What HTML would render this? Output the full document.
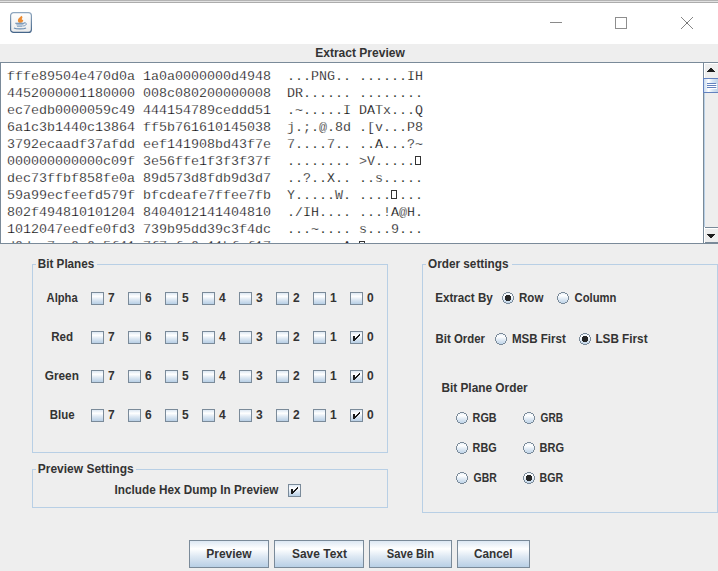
<!DOCTYPE html>
<html><head><meta charset="utf-8">
<style>
*{margin:0;padding:0;box-sizing:border-box}
html,body{width:718px;height:571px;overflow:hidden;background:#eeeeee;position:relative}
body{font-family:"Liberation Sans",sans-serif}
.a{position:absolute}
.t{position:absolute;font:bold 12px "Liberation Sans",sans-serif;line-height:14px;color:#333333;white-space:pre;transform-origin:0 0}
#topline{left:0;top:0;width:718px;height:3px;background:linear-gradient(#b4b4b4 0,#b4b4b4 1px,#e2e2e2 1px,#e2e2e2 2px,#acacac 2px)}
#titlebar{left:0;top:3px;width:718px;height:41px;background:#ffffff}
#ta{left:0;top:62px;width:718px;height:182px;border:1px solid #7a8a99;border-right:none;background:#fff;overflow:hidden}
#hex{left:6px;top:5px;font:13.333px "Liberation Mono",monospace;line-height:17px;color:#000;white-space:pre;-webkit-text-stroke:0.25px #fff}
#sb{left:703px;top:63px;width:15px;height:180px;background:#eeeeee;border-left:1px solid #7a8a99}
.tb{position:absolute;border:1px solid #b8cfe5}
.gap{position:absolute;height:3px;background:#eeeeee}
.cb{position:absolute;width:13px;height:13px;border:1px solid #7a8a99;background:linear-gradient(#dde8f3 0%,#ffffff 30%,#dde8f3 60%,#b8cfe5 100%)}
.ck{position:absolute;left:-1px;top:-1px}
.rb{position:absolute}
.btn{position:absolute;top:540px;height:28px;border:1px solid #7a8a99;background:linear-gradient(#dde8f3 0%,#ffffff 30%,#dde8f3 60%,#b8cfe5 100%)}
</style></head><body>
<svg width="0" height="0" style="position:absolute"><defs><linearGradient id="rg" x1="0" y1="0" x2="0" y2="12" gradientUnits="userSpaceOnUse"><stop offset="0" stop-color="#dde8f3"/><stop offset="0.3" stop-color="#ffffff"/><stop offset="0.6" stop-color="#dde8f3"/><stop offset="1" stop-color="#b8cfe5"/></linearGradient></defs></svg>
<div id="topline" class="a"></div>
<div id="titlebar" class="a">
 <svg class="a" style="left:10px;top:9px" width="23" height="22" viewBox="0 0 23 22">
  <defs><linearGradient id="ib" x1="0" y1="0" x2="0" y2="1"><stop offset="0" stop-color="#8fa7bf"/><stop offset="1" stop-color="#46668a"/></linearGradient>
  <linearGradient id="if" x1="0" y1="0" x2="0" y2="1"><stop offset="0" stop-color="#ffffff"/><stop offset="1" stop-color="#ebebeb"/></linearGradient></defs>
  <rect x="0.6" y="0.6" width="20.8" height="19.8" rx="3" fill="url(#if)" stroke="url(#ib)" stroke-width="1.2"/>
  <path d="M9 10.8 C7.5 9.5 7.5 7.5 9 6 C10 5 11 4.5 11.5 3.7 C12.5 4.5 12.8 5.5 12 6.5 C11.3 7.2 12 7.6 13.3 8.2 C13 9.5 12 10.5 11 10.8 Z" fill="#ec8a30"/>
  <path d="M5.3 11.3 H14.4" stroke="#6a8cb0" stroke-width="1.1"/>
  <path d="M6.3 12.8 H13.4" stroke="#8aa5c2" stroke-width="1"/>
  <path d="M7 14.2 H12.5" stroke="#7595b7" stroke-width="1"/>
  <path d="M14 10.8 C17.5 10.5 17 13.5 13.2 14" fill="none" stroke="#6a8cb0" stroke-width="0.9"/>
  <path d="M4 16 C6 17.3 14 17.3 16 16" fill="none" stroke="#6f90b3" stroke-width="1.3"/>
 </svg>
 <div class="a" style="left:550px;top:19px;width:12px;height:1px;background:#8a8a8a"></div>
 <div class="a" style="left:615px;top:14px;width:12px;height:12px;border:1px solid #8e8e8e"></div>
 <svg class="a" style="left:681px;top:14px" width="12" height="12" shape-rendering="crispEdges" fill="#858585"><rect x="0" y="0" width="1" height="1"/><rect x="11" y="0" width="1" height="1"/><rect x="1" y="1" width="1" height="1"/><rect x="10" y="1" width="1" height="1"/><rect x="2" y="2" width="1" height="1"/><rect x="9" y="2" width="1" height="1"/><rect x="3" y="3" width="1" height="1"/><rect x="8" y="3" width="1" height="1"/><rect x="4" y="4" width="1" height="1"/><rect x="7" y="4" width="1" height="1"/><rect x="5" y="5" width="1" height="1"/><rect x="6" y="5" width="1" height="1"/><rect x="6" y="6" width="1" height="1"/><rect x="5" y="6" width="1" height="1"/><rect x="7" y="7" width="1" height="1"/><rect x="4" y="7" width="1" height="1"/><rect x="8" y="8" width="1" height="1"/><rect x="3" y="8" width="1" height="1"/><rect x="9" y="9" width="1" height="1"/><rect x="2" y="9" width="1" height="1"/><rect x="10" y="10" width="1" height="1"/><rect x="1" y="10" width="1" height="1"/><rect x="11" y="11" width="1" height="1"/><rect x="0" y="11" width="1" height="1"/><rect x="5" y="5" width="2" height="2" fill="#777"/></svg>
</div>

<div id="ta" class="a"><div id="hex" class="a">fffe89504e470d0a 1a0a0000000d4948  ...PNG.. ......IH
4452000001180000 008c080200000008  DR...... ........
ec7edb0000059c49 444154789ceddd51  .~.....I DATx...Q
6a1c3b1440c13864 ff5b761610145038  j.;.@.8d .[v...P8
3792ecaadf37afdd eef141908bd43f7e  7....7.. ..A...?~
000000000000c09f 3e56ffe1f3f3f37f  ........ &gt;V..... 
dec73ffbf858fe0a 89d573d8fdb9d3d7  ..?..X.. ..s.....
59a99ecfeefd579f bfcdeafe7ffee7fb  Y.....W. .... ...
802f494810101204 8404012141404810  ./IH.... ...!A@H.
1012047eedfe0fd3 739b95dd39c3f4dc  ...~.... s...9...
d0dae7ac0e0a5f41 7f7efa0c11bfef17  ......_A  ......</div><div class="a" style="left:414px;top:93px;width:6px;height:9px;border:1px solid #333"></div><div class="a" style="left:390px;top:127px;width:6px;height:9px;border:1px solid #333"></div><div class="a" style="left:358px;top:178px;width:6px;height:9px;border:1px solid #333"></div></div>
<div id="sb" class="a">
 <div class="a" style="left:0;top:0;width:14px;height:15px;border-top:1px solid #fff;border-left:1px solid #fff"></div>
 <svg class="a" style="left:3px;top:5px" width="8" height="4" shape-rendering="crispEdges"><rect x="3" y="0" width="2" height="1" fill="#1e1e1e"/><rect x="2" y="1" width="4" height="1" fill="#1e1e1e"/><rect x="1" y="2" width="6" height="1" fill="#1e1e1e"/><rect x="0" y="3" width="8" height="1" fill="#1e1e1e"/></svg>
 <div class="a" style="left:-1px;top:15px;width:16px;height:15px;border:1px solid #6382bf;border-right:none;background:linear-gradient(90deg,#c9dbef 0%,#ffffff 30%,#d6e4f3 60%,#b8cfe5 100%)"></div>
 <div class="a" style="left:3px;top:20px;width:9px;height:1px;background:#6382bf;box-shadow:1px 1px 0 #fff"></div>
 <div class="a" style="left:3px;top:22px;width:9px;height:1px;background:#6382bf;box-shadow:1px 1px 0 #fff"></div>
 <div class="a" style="left:3px;top:24px;width:9px;height:1px;background:#6382bf;box-shadow:1px 1px 0 #fff"></div>
 <div class="a" style="left:0;top:30px;width:1px;height:134px;background:#b8cfe5"></div>
 <div class="a" style="left:0;top:164px;width:14px;height:16px;background:#fff"></div>
 <div class="a" style="left:1px;top:164px;width:13px;height:16px;border-top:1px solid #7a8a99;border-bottom:1px solid #7a8a99"></div>
 <div class="a" style="left:1px;top:165px;width:13px;height:14px;border-top:1px solid #fff;background:#eeeeee"></div>
 <svg class="a" style="left:3px;top:171px" width="8" height="4" shape-rendering="crispEdges"><rect x="0" y="0" width="8" height="1" fill="#1e1e1e"/><rect x="1" y="1" width="6" height="1" fill="#1e1e1e"/><rect x="2" y="2" width="4" height="1" fill="#1e1e1e"/><rect x="3" y="3" width="2" height="1" fill="#1e1e1e"/></svg>
</div>

<div class="t" id="k0" style="left:315px;top:46px;transform:translateX(0.20px) scaleX(1.0024)">Extract Preview</div>
<div class="tb" style="left:32px;top:264px;width:356px;height:189px"></div>
<div class="gap" style="left:36px;top:263px;width:61px"></div>
<div class="t" id="k1" style="left:38px;top:257px;transform:translateX(-0.20px) scaleX(0.9724)">Bit Planes</div>
<div class="tb" style="left:32px;top:469px;width:356px;height:39px"></div>
<div class="gap" style="left:36px;top:468px;width:100px"></div>
<div class="t" id="k2" style="left:38px;top:462px;transform:translateX(-0.21px) scaleX(0.9980)">Preview Settings</div>
<div class="tb" style="left:422px;top:264px;width:296px;height:249px"></div>
<div class="gap" style="left:426px;top:263px;width:86px"></div>
<div class="t" id="k3" style="left:428px;top:257px;transform:translateX(-0.00px) scaleX(0.9805)">Order settings</div>
<div class="t" id="k4" style="left:46px;top:291px;transform:translateX(0.60px) scaleX(0.9295)">Alpha</div>
<div class="cb" style="left:91px;top:292px"></div>
<div class="t" id="k5" style="left:108px;top:291px">7</div>
<div class="cb" style="left:128px;top:292px"></div>
<div class="t" id="k6" style="left:145px;top:291px">6</div>
<div class="cb" style="left:165px;top:292px"></div>
<div class="t" id="k7" style="left:182px;top:291px">5</div>
<div class="cb" style="left:202px;top:292px"></div>
<div class="t" id="k8" style="left:219px;top:291px">4</div>
<div class="cb" style="left:239px;top:292px"></div>
<div class="t" id="k9" style="left:256px;top:291px">3</div>
<div class="cb" style="left:276px;top:292px"></div>
<div class="t" id="k10" style="left:293px;top:291px">2</div>
<div class="cb" style="left:313px;top:292px"></div>
<div class="t" id="k11" style="left:330px;top:291px">1</div>
<div class="cb" style="left:350px;top:292px"></div>
<div class="t" id="k12" style="left:367px;top:291px">0</div>
<div class="t" id="k13" style="left:51px;top:330px;transform:translateX(0.20px) scaleX(0.9640)">Red</div>
<div class="cb" style="left:91px;top:331px"></div>
<div class="t" id="k14" style="left:108px;top:330px">7</div>
<div class="cb" style="left:128px;top:331px"></div>
<div class="t" id="k15" style="left:145px;top:330px">6</div>
<div class="cb" style="left:165px;top:331px"></div>
<div class="t" id="k16" style="left:182px;top:330px">5</div>
<div class="cb" style="left:202px;top:331px"></div>
<div class="t" id="k17" style="left:219px;top:330px">4</div>
<div class="cb" style="left:239px;top:331px"></div>
<div class="t" id="k18" style="left:256px;top:330px">3</div>
<div class="cb" style="left:276px;top:331px"></div>
<div class="t" id="k19" style="left:293px;top:330px">2</div>
<div class="cb" style="left:313px;top:331px"></div>
<div class="t" id="k20" style="left:330px;top:330px">1</div>
<div class="cb" style="left:350px;top:331px"><svg class="ck" width="13" height="13" shape-rendering="crispEdges"><rect x="3" y="5" width="2" height="5" fill="#1a1a1a"/><rect x="9" y="3" width="1" height="1" fill="#1a1a1a"/><rect x="9" y="4" width="1" height="1" fill="#1a1a1a"/><rect x="8" y="4" width="1" height="1" fill="#1a1a1a"/><rect x="8" y="5" width="1" height="1" fill="#1a1a1a"/><rect x="7" y="5" width="1" height="1" fill="#1a1a1a"/><rect x="7" y="6" width="1" height="1" fill="#1a1a1a"/><rect x="6" y="6" width="1" height="1" fill="#1a1a1a"/><rect x="6" y="7" width="1" height="1" fill="#1a1a1a"/><rect x="5" y="7" width="1" height="1" fill="#1a1a1a"/><rect x="5" y="8" width="1" height="1" fill="#1a1a1a"/></svg></div>
<div class="t" id="k21" style="left:367px;top:330px">0</div>
<div class="t" id="k22" style="left:45px;top:369px;transform:translateX(-0.20px) scaleX(0.9824)">Green</div>
<div class="cb" style="left:91px;top:370px"></div>
<div class="t" id="k23" style="left:108px;top:369px">7</div>
<div class="cb" style="left:128px;top:370px"></div>
<div class="t" id="k24" style="left:145px;top:369px">6</div>
<div class="cb" style="left:165px;top:370px"></div>
<div class="t" id="k25" style="left:182px;top:369px">5</div>
<div class="cb" style="left:202px;top:370px"></div>
<div class="t" id="k26" style="left:219px;top:369px">4</div>
<div class="cb" style="left:239px;top:370px"></div>
<div class="t" id="k27" style="left:256px;top:369px">3</div>
<div class="cb" style="left:276px;top:370px"></div>
<div class="t" id="k28" style="left:293px;top:369px">2</div>
<div class="cb" style="left:313px;top:370px"></div>
<div class="t" id="k29" style="left:330px;top:369px">1</div>
<div class="cb" style="left:350px;top:370px"><svg class="ck" width="13" height="13" shape-rendering="crispEdges"><rect x="3" y="5" width="2" height="5" fill="#1a1a1a"/><rect x="9" y="3" width="1" height="1" fill="#1a1a1a"/><rect x="9" y="4" width="1" height="1" fill="#1a1a1a"/><rect x="8" y="4" width="1" height="1" fill="#1a1a1a"/><rect x="8" y="5" width="1" height="1" fill="#1a1a1a"/><rect x="7" y="5" width="1" height="1" fill="#1a1a1a"/><rect x="7" y="6" width="1" height="1" fill="#1a1a1a"/><rect x="6" y="6" width="1" height="1" fill="#1a1a1a"/><rect x="6" y="7" width="1" height="1" fill="#1a1a1a"/><rect x="5" y="7" width="1" height="1" fill="#1a1a1a"/><rect x="5" y="8" width="1" height="1" fill="#1a1a1a"/></svg></div>
<div class="t" id="k30" style="left:367px;top:369px">0</div>
<div class="t" id="k31" style="left:50px;top:408px;transform:translateX(-0.21px) scaleX(0.9541)">Blue</div>
<div class="cb" style="left:91px;top:409px"></div>
<div class="t" id="k32" style="left:108px;top:408px">7</div>
<div class="cb" style="left:128px;top:409px"></div>
<div class="t" id="k33" style="left:145px;top:408px">6</div>
<div class="cb" style="left:165px;top:409px"></div>
<div class="t" id="k34" style="left:182px;top:408px">5</div>
<div class="cb" style="left:202px;top:409px"></div>
<div class="t" id="k35" style="left:219px;top:408px">4</div>
<div class="cb" style="left:239px;top:409px"></div>
<div class="t" id="k36" style="left:256px;top:408px">3</div>
<div class="cb" style="left:276px;top:409px"></div>
<div class="t" id="k37" style="left:293px;top:408px">2</div>
<div class="cb" style="left:313px;top:409px"></div>
<div class="t" id="k38" style="left:330px;top:408px">1</div>
<div class="cb" style="left:350px;top:409px"><svg class="ck" width="13" height="13" shape-rendering="crispEdges"><rect x="3" y="5" width="2" height="5" fill="#1a1a1a"/><rect x="9" y="3" width="1" height="1" fill="#1a1a1a"/><rect x="9" y="4" width="1" height="1" fill="#1a1a1a"/><rect x="8" y="4" width="1" height="1" fill="#1a1a1a"/><rect x="8" y="5" width="1" height="1" fill="#1a1a1a"/><rect x="7" y="5" width="1" height="1" fill="#1a1a1a"/><rect x="7" y="6" width="1" height="1" fill="#1a1a1a"/><rect x="6" y="6" width="1" height="1" fill="#1a1a1a"/><rect x="6" y="7" width="1" height="1" fill="#1a1a1a"/><rect x="5" y="7" width="1" height="1" fill="#1a1a1a"/><rect x="5" y="8" width="1" height="1" fill="#1a1a1a"/></svg></div>
<div class="t" id="k39" style="left:367px;top:408px">0</div>
<div class="t" id="k40" style="left:115px;top:483px;transform:translateX(-0.40px) scaleX(0.9786)">Include Hex Dump In Preview</div>
<div class="cb" style="left:288px;top:484px"><svg class="ck" width="13" height="13" shape-rendering="crispEdges"><rect x="3" y="5" width="2" height="5" fill="#1a1a1a"/><rect x="9" y="3" width="1" height="1" fill="#1a1a1a"/><rect x="9" y="4" width="1" height="1" fill="#1a1a1a"/><rect x="8" y="4" width="1" height="1" fill="#1a1a1a"/><rect x="8" y="5" width="1" height="1" fill="#1a1a1a"/><rect x="7" y="5" width="1" height="1" fill="#1a1a1a"/><rect x="7" y="6" width="1" height="1" fill="#1a1a1a"/><rect x="6" y="6" width="1" height="1" fill="#1a1a1a"/><rect x="6" y="7" width="1" height="1" fill="#1a1a1a"/><rect x="5" y="7" width="1" height="1" fill="#1a1a1a"/><rect x="5" y="8" width="1" height="1" fill="#1a1a1a"/></svg></div>
<div class="t" id="k41" style="left:435px;top:291px;transform:translateX(0.19px) scaleX(0.9704)">Extract By</div>
<svg class="rb" style="left:502px;top:292px" width="12" height="12" shape-rendering="crispEdges"><rect x="4" y="1" width="4" height="1" fill="url(#rg)"/><rect x="2" y="2" width="8" height="2" fill="url(#rg)"/><rect x="1" y="4" width="10" height="4" fill="url(#rg)"/><rect x="2" y="8" width="8" height="2" fill="url(#rg)"/><rect x="4" y="10" width="4" height="1" fill="url(#rg)"/><rect x="4" y="0" width="4" height="1" fill="#7a8a99"/><rect x="2" y="1" width="2" height="1" fill="#7a8a99"/><rect x="8" y="1" width="2" height="1" fill="#7a8a99"/><rect x="1" y="2" width="1" height="2" fill="#7a8a99"/><rect x="10" y="2" width="1" height="2" fill="#7a8a99"/><rect x="0" y="4" width="1" height="4" fill="#7a8a99"/><rect x="11" y="4" width="1" height="4" fill="#7a8a99"/><rect x="1" y="8" width="1" height="2" fill="#7a8a99"/><rect x="10" y="8" width="1" height="2" fill="#7a8a99"/><rect x="2" y="10" width="2" height="1" fill="#7a8a99"/><rect x="8" y="10" width="2" height="1" fill="#7a8a99"/><rect x="4" y="11" width="4" height="1" fill="#7a8a99"/><rect x="4" y="3" width="4" height="1" fill="#262626"/><rect x="3" y="4" width="6" height="4" fill="#262626"/><rect x="4" y="8" width="4" height="1" fill="#262626"/></svg>
<div class="t" id="k42" style="left:519px;top:291px;transform:translateX(0.00px) scaleX(0.9615)">Row</div>
<svg class="rb" style="left:557px;top:292px" width="12" height="12" shape-rendering="crispEdges"><rect x="4" y="1" width="4" height="1" fill="url(#rg)"/><rect x="2" y="2" width="8" height="2" fill="url(#rg)"/><rect x="1" y="4" width="10" height="4" fill="url(#rg)"/><rect x="2" y="8" width="8" height="2" fill="url(#rg)"/><rect x="4" y="10" width="4" height="1" fill="url(#rg)"/><rect x="4" y="0" width="4" height="1" fill="#7a8a99"/><rect x="2" y="1" width="2" height="1" fill="#7a8a99"/><rect x="8" y="1" width="2" height="1" fill="#7a8a99"/><rect x="1" y="2" width="1" height="2" fill="#7a8a99"/><rect x="10" y="2" width="1" height="2" fill="#7a8a99"/><rect x="0" y="4" width="1" height="4" fill="#7a8a99"/><rect x="11" y="4" width="1" height="4" fill="#7a8a99"/><rect x="1" y="8" width="1" height="2" fill="#7a8a99"/><rect x="10" y="8" width="1" height="2" fill="#7a8a99"/><rect x="2" y="10" width="2" height="1" fill="#7a8a99"/><rect x="8" y="10" width="2" height="1" fill="#7a8a99"/><rect x="4" y="11" width="4" height="1" fill="#7a8a99"/></svg>
<div class="t" id="k43" style="left:574px;top:291px;transform:translateX(0.59px) scaleX(0.9368)">Column</div>
<div class="t" id="k44" style="left:436px;top:332px;transform:translateX(-0.40px) scaleX(0.9500)">Bit Order</div>
<svg class="rb" style="left:495px;top:333px" width="12" height="12" shape-rendering="crispEdges"><rect x="4" y="1" width="4" height="1" fill="url(#rg)"/><rect x="2" y="2" width="8" height="2" fill="url(#rg)"/><rect x="1" y="4" width="10" height="4" fill="url(#rg)"/><rect x="2" y="8" width="8" height="2" fill="url(#rg)"/><rect x="4" y="10" width="4" height="1" fill="url(#rg)"/><rect x="4" y="0" width="4" height="1" fill="#7a8a99"/><rect x="2" y="1" width="2" height="1" fill="#7a8a99"/><rect x="8" y="1" width="2" height="1" fill="#7a8a99"/><rect x="1" y="2" width="1" height="2" fill="#7a8a99"/><rect x="10" y="2" width="1" height="2" fill="#7a8a99"/><rect x="0" y="4" width="1" height="4" fill="#7a8a99"/><rect x="11" y="4" width="1" height="4" fill="#7a8a99"/><rect x="1" y="8" width="1" height="2" fill="#7a8a99"/><rect x="10" y="8" width="1" height="2" fill="#7a8a99"/><rect x="2" y="10" width="2" height="1" fill="#7a8a99"/><rect x="8" y="10" width="2" height="1" fill="#7a8a99"/><rect x="4" y="11" width="4" height="1" fill="#7a8a99"/></svg>
<div class="t" id="k45" style="left:512px;top:332px;transform:translateX(0.00px) scaleX(0.9608)">MSB First</div>
<svg class="rb" style="left:579px;top:333px" width="12" height="12" shape-rendering="crispEdges"><rect x="4" y="1" width="4" height="1" fill="url(#rg)"/><rect x="2" y="2" width="8" height="2" fill="url(#rg)"/><rect x="1" y="4" width="10" height="4" fill="url(#rg)"/><rect x="2" y="8" width="8" height="2" fill="url(#rg)"/><rect x="4" y="10" width="4" height="1" fill="url(#rg)"/><rect x="4" y="0" width="4" height="1" fill="#7a8a99"/><rect x="2" y="1" width="2" height="1" fill="#7a8a99"/><rect x="8" y="1" width="2" height="1" fill="#7a8a99"/><rect x="1" y="2" width="1" height="2" fill="#7a8a99"/><rect x="10" y="2" width="1" height="2" fill="#7a8a99"/><rect x="0" y="4" width="1" height="4" fill="#7a8a99"/><rect x="11" y="4" width="1" height="4" fill="#7a8a99"/><rect x="1" y="8" width="1" height="2" fill="#7a8a99"/><rect x="10" y="8" width="1" height="2" fill="#7a8a99"/><rect x="2" y="10" width="2" height="1" fill="#7a8a99"/><rect x="8" y="10" width="2" height="1" fill="#7a8a99"/><rect x="4" y="11" width="4" height="1" fill="#7a8a99"/><rect x="4" y="3" width="4" height="1" fill="#262626"/><rect x="3" y="4" width="6" height="4" fill="#262626"/><rect x="4" y="8" width="4" height="1" fill="#262626"/></svg>
<div class="t" id="k46" style="left:596px;top:332px;transform:translateX(-0.61px) scaleX(0.9777)">LSB First</div>
<div class="t" id="k47" style="left:442px;top:381px;transform:translateX(-0.61px) scaleX(0.9866)">Bit Plane Order</div>
<svg class="rb" style="left:456px;top:412px" width="12" height="12" shape-rendering="crispEdges"><rect x="4" y="1" width="4" height="1" fill="url(#rg)"/><rect x="2" y="2" width="8" height="2" fill="url(#rg)"/><rect x="1" y="4" width="10" height="4" fill="url(#rg)"/><rect x="2" y="8" width="8" height="2" fill="url(#rg)"/><rect x="4" y="10" width="4" height="1" fill="url(#rg)"/><rect x="4" y="0" width="4" height="1" fill="#7a8a99"/><rect x="2" y="1" width="2" height="1" fill="#7a8a99"/><rect x="8" y="1" width="2" height="1" fill="#7a8a99"/><rect x="1" y="2" width="1" height="2" fill="#7a8a99"/><rect x="10" y="2" width="1" height="2" fill="#7a8a99"/><rect x="0" y="4" width="1" height="4" fill="#7a8a99"/><rect x="11" y="4" width="1" height="4" fill="#7a8a99"/><rect x="1" y="8" width="1" height="2" fill="#7a8a99"/><rect x="10" y="8" width="1" height="2" fill="#7a8a99"/><rect x="2" y="10" width="2" height="1" fill="#7a8a99"/><rect x="8" y="10" width="2" height="1" fill="#7a8a99"/><rect x="4" y="11" width="4" height="1" fill="#7a8a99"/></svg>
<div class="t" id="k48" style="left:473px;top:411px;transform:translateX(-0.41px) scaleX(0.9001)">RGB</div>
<svg class="rb" style="left:523px;top:412px" width="12" height="12" shape-rendering="crispEdges"><rect x="4" y="1" width="4" height="1" fill="url(#rg)"/><rect x="2" y="2" width="8" height="2" fill="url(#rg)"/><rect x="1" y="4" width="10" height="4" fill="url(#rg)"/><rect x="2" y="8" width="8" height="2" fill="url(#rg)"/><rect x="4" y="10" width="4" height="1" fill="url(#rg)"/><rect x="4" y="0" width="4" height="1" fill="#7a8a99"/><rect x="2" y="1" width="2" height="1" fill="#7a8a99"/><rect x="8" y="1" width="2" height="1" fill="#7a8a99"/><rect x="1" y="2" width="1" height="2" fill="#7a8a99"/><rect x="10" y="2" width="1" height="2" fill="#7a8a99"/><rect x="0" y="4" width="1" height="4" fill="#7a8a99"/><rect x="11" y="4" width="1" height="4" fill="#7a8a99"/><rect x="1" y="8" width="1" height="2" fill="#7a8a99"/><rect x="10" y="8" width="1" height="2" fill="#7a8a99"/><rect x="2" y="10" width="2" height="1" fill="#7a8a99"/><rect x="8" y="10" width="2" height="1" fill="#7a8a99"/><rect x="4" y="11" width="4" height="1" fill="#7a8a99"/></svg>
<div class="t" id="k49" style="left:540px;top:411px;transform:translateX(0.59px) scaleX(0.8404)">GRB</div>
<svg class="rb" style="left:456px;top:442px" width="12" height="12" shape-rendering="crispEdges"><rect x="4" y="1" width="4" height="1" fill="url(#rg)"/><rect x="2" y="2" width="8" height="2" fill="url(#rg)"/><rect x="1" y="4" width="10" height="4" fill="url(#rg)"/><rect x="2" y="8" width="8" height="2" fill="url(#rg)"/><rect x="4" y="10" width="4" height="1" fill="url(#rg)"/><rect x="4" y="0" width="4" height="1" fill="#7a8a99"/><rect x="2" y="1" width="2" height="1" fill="#7a8a99"/><rect x="8" y="1" width="2" height="1" fill="#7a8a99"/><rect x="1" y="2" width="1" height="2" fill="#7a8a99"/><rect x="10" y="2" width="1" height="2" fill="#7a8a99"/><rect x="0" y="4" width="1" height="4" fill="#7a8a99"/><rect x="11" y="4" width="1" height="4" fill="#7a8a99"/><rect x="1" y="8" width="1" height="2" fill="#7a8a99"/><rect x="10" y="8" width="1" height="2" fill="#7a8a99"/><rect x="2" y="10" width="2" height="1" fill="#7a8a99"/><rect x="8" y="10" width="2" height="1" fill="#7a8a99"/><rect x="4" y="11" width="4" height="1" fill="#7a8a99"/></svg>
<div class="t" id="k50" style="left:473px;top:441px;transform:translateX(-0.41px) scaleX(0.9001)">RBG</div>
<svg class="rb" style="left:523px;top:442px" width="12" height="12" shape-rendering="crispEdges"><rect x="4" y="1" width="4" height="1" fill="url(#rg)"/><rect x="2" y="2" width="8" height="2" fill="url(#rg)"/><rect x="1" y="4" width="10" height="4" fill="url(#rg)"/><rect x="2" y="8" width="8" height="2" fill="url(#rg)"/><rect x="4" y="10" width="4" height="1" fill="url(#rg)"/><rect x="4" y="0" width="4" height="1" fill="#7a8a99"/><rect x="2" y="1" width="2" height="1" fill="#7a8a99"/><rect x="8" y="1" width="2" height="1" fill="#7a8a99"/><rect x="1" y="2" width="1" height="2" fill="#7a8a99"/><rect x="10" y="2" width="1" height="2" fill="#7a8a99"/><rect x="0" y="4" width="1" height="4" fill="#7a8a99"/><rect x="11" y="4" width="1" height="4" fill="#7a8a99"/><rect x="1" y="8" width="1" height="2" fill="#7a8a99"/><rect x="10" y="8" width="1" height="2" fill="#7a8a99"/><rect x="2" y="10" width="2" height="1" fill="#7a8a99"/><rect x="8" y="10" width="2" height="1" fill="#7a8a99"/><rect x="4" y="11" width="4" height="1" fill="#7a8a99"/></svg>
<div class="t" id="k51" style="left:540px;top:441px;transform:translateX(-0.43px) scaleX(0.9168)">BRG</div>
<svg class="rb" style="left:456px;top:472px" width="12" height="12" shape-rendering="crispEdges"><rect x="4" y="1" width="4" height="1" fill="url(#rg)"/><rect x="2" y="2" width="8" height="2" fill="url(#rg)"/><rect x="1" y="4" width="10" height="4" fill="url(#rg)"/><rect x="2" y="8" width="8" height="2" fill="url(#rg)"/><rect x="4" y="10" width="4" height="1" fill="url(#rg)"/><rect x="4" y="0" width="4" height="1" fill="#7a8a99"/><rect x="2" y="1" width="2" height="1" fill="#7a8a99"/><rect x="8" y="1" width="2" height="1" fill="#7a8a99"/><rect x="1" y="2" width="1" height="2" fill="#7a8a99"/><rect x="10" y="2" width="1" height="2" fill="#7a8a99"/><rect x="0" y="4" width="1" height="4" fill="#7a8a99"/><rect x="11" y="4" width="1" height="4" fill="#7a8a99"/><rect x="1" y="8" width="1" height="2" fill="#7a8a99"/><rect x="10" y="8" width="1" height="2" fill="#7a8a99"/><rect x="2" y="10" width="2" height="1" fill="#7a8a99"/><rect x="8" y="10" width="2" height="1" fill="#7a8a99"/><rect x="4" y="11" width="4" height="1" fill="#7a8a99"/></svg>
<div class="t" id="k52" style="left:473px;top:471px;transform:translateX(0.60px) scaleX(0.8667)">GBR</div>
<svg class="rb" style="left:523px;top:472px" width="12" height="12" shape-rendering="crispEdges"><rect x="4" y="1" width="4" height="1" fill="url(#rg)"/><rect x="2" y="2" width="8" height="2" fill="url(#rg)"/><rect x="1" y="4" width="10" height="4" fill="url(#rg)"/><rect x="2" y="8" width="8" height="2" fill="url(#rg)"/><rect x="4" y="10" width="4" height="1" fill="url(#rg)"/><rect x="4" y="0" width="4" height="1" fill="#7a8a99"/><rect x="2" y="1" width="2" height="1" fill="#7a8a99"/><rect x="8" y="1" width="2" height="1" fill="#7a8a99"/><rect x="1" y="2" width="1" height="2" fill="#7a8a99"/><rect x="10" y="2" width="1" height="2" fill="#7a8a99"/><rect x="0" y="4" width="1" height="4" fill="#7a8a99"/><rect x="11" y="4" width="1" height="4" fill="#7a8a99"/><rect x="1" y="8" width="1" height="2" fill="#7a8a99"/><rect x="10" y="8" width="1" height="2" fill="#7a8a99"/><rect x="2" y="10" width="2" height="1" fill="#7a8a99"/><rect x="8" y="10" width="2" height="1" fill="#7a8a99"/><rect x="4" y="11" width="4" height="1" fill="#7a8a99"/><rect x="4" y="3" width="4" height="1" fill="#262626"/><rect x="3" y="4" width="6" height="4" fill="#262626"/><rect x="4" y="8" width="4" height="1" fill="#262626"/></svg>
<div class="t" id="k53" style="left:540px;top:471px;transform:translateX(-0.43px) scaleX(0.8828)">BGR</div>
<div class="btn" style="left:189px;width:80px"></div>
<div class="t" id="k54" style="left:206px;top:547px;transform:translateX(0.20px) scaleX(1.0001)">Preview</div>
<div class="btn" style="left:274px;width:90px"></div>
<div class="t" id="k55" style="left:291px;top:547px;transform:translateX(1.00px) scaleX(0.9964)">Save Text</div>
<div class="btn" style="left:369px;width:83px"></div>
<div class="t" id="k56" style="left:386px;top:547px;transform:translateX(0.80px) scaleX(0.9320)">Save Bin</div>
<div class="btn" style="left:457px;width:73px"></div>
<div class="t" id="k57" style="left:473px;top:547px;transform:translateX(1.00px) scaleX(0.9795)">Cancel</div>
</body></html>
